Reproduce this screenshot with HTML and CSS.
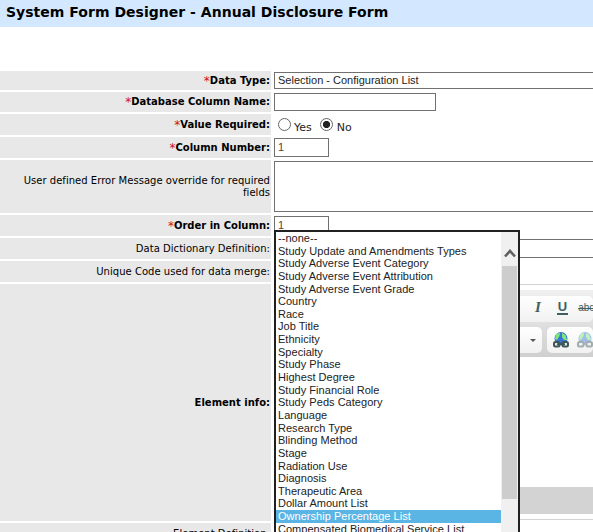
FILE: index.html
```html
<!DOCTYPE html>
<html>
  <head>
    <meta charset="utf-8" />
    <title>System Form Designer</title>
    <link rel="stylesheet" href="styles.css">
  </head>
  <body>
    <h1><span>System Form Designer - Annual Disclosure Form</span></h1>
    <form class="designer">
      <div class="row data-type">
        <label class="required"><span class="star">*</span><span>Data Type:</span></label>
        <div class="field"><div class="select wide">Selection - Configuration List</div></div>
      </div>
      <div class="row column-name">
        <label class="required"><span class="star">*</span><span>Database Column Name:</span></label>
        <div class="field"><input type="text" class="medium" /></div>
      </div>
      <div class="row value-required">
        <label class="required"><span class="star">*</span><span>Value Required:</span></label>
        <div class="field radios">
          <span class="radio"></span><span class="yes">Yes</span>
          <span class="radio checked"></span><span>No</span>
        </div>
      </div>
      <div class="row column-number">
        <label class="required"><span class="star">*</span><span>Column Number:</span></label>
        <div class="field"><input type="text" class="small" value="1" /></div>
      </div>
      <div class="row error-message">
        <label><span>User defined Error Message override for required<br>fields</span></label>
        <div class="field"><textarea class="wide"></textarea></div>
      </div>
      <div class="row order">
        <label class="required"><span class="star">*</span><span>Order in Column:</span></label>
        <div class="field"><input type="text" class="small" value="1" /></div>
      </div>
      <div class="row dictionary">
        <label><span>Data Dictionary Definition:</span></label>
        <div class="field">
          <div class="select wide"></div>
          <!-- open option list -->
          <div class="dropdown">
            <ul>
              <li>--none--</li>
              <li>Study Update and Amendments Types</li>
              <li>Study Adverse Event Category</li>
              <li>Study Adverse Event Attribution</li>
              <li>Study Adverse Event Grade</li>
              <li>Country</li>
              <li>Race</li>
              <li>Job Title</li>
              <li>Ethnicity</li>
              <li>Specialty</li>
              <li>Study Phase</li>
              <li>Highest Degree</li>
              <li>Study Financial Role</li>
              <li>Study Peds Category</li>
              <li>Language</li>
              <li>Research Type</li>
              <li>Blinding Method</li>
              <li>Stage</li>
              <li>Radiation Use</li>
              <li>Diagnosis</li>
              <li>Therapeutic Area</li>
              <li>Dollar Amount List</li>
              <li class="selected">Ownership Percentage List</li>
              <li>Compensated Biomedical Service List</li>
            </ul>
            <div class="scrollbar">
              <svg width="12" height="10" viewBox="0 0 12 10"><path d="M1 8.5 L6 3 L11 8.5" fill="none" stroke="#606060" stroke-width="2.6"/></svg>
              <div class="thumb"></div>
            </div>
          </div>
        </div>
      </div>
      <div class="row merge-code">
        <label><span>Unique Code used for data merge:</span></label>
        <div class="field"></div>
      </div>
      <div class="row element-info">
        <label class="required"><span>Element info:</span></label>
        <div class="field editor">
          <div class="toolbar">
            <div class="group first">
              <span class="italic">I</span>
              <span class="underline">U</span>
              <span class="strike">abc</span>
            </div>
            <div class="second-line">
              <div class="group combo"><i class="arrow"></i></div>
              <div class="group links">
                <svg width="16" height="16" viewBox="0 0 16 16">
                  <circle cx="8" cy="6.500" r="6.500" fill="#3c74d6"/>
                  <path d="M3 2.500 Q5 .5 7 1 L6.500 4 L4 8 L2 7Z M9 1 L12.500 3 L14 8 L11 8 L9 5Z" fill="#7be87b"/>
                  <g fill="#e8eeee" stroke="#3d5657" stroke-width="2"><rect x="1" y="10" width="5.500" height="4.500" rx="1.500"/><rect x="9.500" y="10" width="5.500" height="4.500" rx="1.500"/></g>
                  <path d="M4 12.200H12" stroke="#3d5657" stroke-width="2"/>
                </svg>
                <svg class="off" width="16" height="16" viewBox="0 0 16 16">
                  <circle cx="8" cy="6.500" r="6.500" fill="#3c74d6"/>
                  <path d="M3 2.500 Q5 .5 7 1 L6.500 4 L4 8 L2 7Z M9 1 L12.500 3 L14 8 L11 8 L9 5Z" fill="#7be87b"/>
                  <g fill="#e8eeee" stroke="#3d5657" stroke-width="2"><rect x="1" y="10" width="5.500" height="4.500" rx="1.500"/><rect x="9.500" y="10" width="5.500" height="4.500" rx="1.500"/></g>
                </svg>
              </div>
            </div>
          </div>
          <div class="content"></div>
          <div class="status"></div>
        </div>
      </div>
      <div class="row element-definition">
        <label><span>Element Definition:</span></label>
        <div class="field"></div>
      </div>
    </form>
  </body>
</html>
```

FILE: styles.css
```css
* {
  box-sizing: border-box;
}

body {
  margin: 0;
  height: 532px;
  overflow: hidden;
  background: #fff;
  color: #000;
  font-family: Verdana, "DejaVu Sans", sans-serif;
  font-size: 11px;
}

h1 {
  margin: 0 0 44px;
  height: 27px;
  padding-left: 6px;
  background: #d3e8ff;
  font-size: 14px;
  letter-spacing: 0.02px;
  line-height: 24px;
  white-space: nowrap;
}

.designer {
  display: flex;
  flex-direction: column;
  gap: 2px;
}

.row {
  display: flex;
  flex-shrink: 0;
}

.row > label {
  display: flex;
  align-items: center;
  justify-content: flex-end;
  width: 271px;
  flex-shrink: 0;
  padding-right: 1px;
  background: #e8e8e8;
  font-size: 10px;
  letter-spacing: 0.03px;
  line-height: 12px;
  text-align: right;
  white-space: nowrap;
}

.row > label.required {
  font-weight: bold;
  letter-spacing: 0;
}

.star {
  color: #d01020;
  font-weight: normal;
  font-size: 12px;
}

.field {
  flex: 1;
  min-width: 0;
  padding: 1px 0 1px 3px;
  position: relative;
  display: flex;
}

.data-type { height: 19px; }
.column-name { height: 20px; }
.value-required,
.column-number,
.order,
.dictionary,
.merge-code { height: 21px; }
.error-message { height: 53px; }
.element-info { height: 237px; }
.element-definition { height: 21px; }

input,
textarea,
.select {
  display: block;
  height: 100%;
  margin: 0;
  padding: 0 3px;
  border: 1px solid #707070;
  border-radius: 0;
  background: #fff;
  color: #222;
  font: 11px "Liberation Sans", Arial, sans-serif;
  resize: none;
}

.select {
  line-height: 15px;
}

.wide {
  width: 340px;
  flex-shrink: 0;
}

.medium { width: 162px; }
.small {
  width: 55px;
  padding-bottom: 2px;
  color: #6b3a30;
}

.radios {
  padding: 0 0 0 7px;
  align-items: flex-start;
  color: #222;
  line-height: 27px;
}

.radio {
  width: 13px;
  height: 13px;
  flex-shrink: 0;
  margin: 4px 3px 0 0;
  border: 1px solid #666;
  border-radius: 50%;
}

.radio.checked {
  margin-right: 4px;
  background: radial-gradient(circle, #222 3.2px, #fff 4px);
}

.yes {
  margin-right: 8px;
}

.dropdown {
  position: absolute;
  z-index: 2;
  left: 3px;
  top: -8px;
  width: 246px;
  height: 320px;
  border: 2px solid #202020;
  background: #fff;
  display: flex;
  overflow: hidden;
}

.dropdown ul {
  flex: 1;
  margin: 0;
  padding: 0;
  list-style: none;
  font: 11px/12.65px "Liberation Sans", Arial, sans-serif;
  letter-spacing: 0.03px;
  color: #222;
}

.dropdown li {
  height: 12.65px;
  padding-left: 2px;
  white-space: nowrap;
}

.dropdown .selected {
  background: #5ab4e4;
  color: #fff;
}

.scrollbar {
  width: 17px;
  padding: 0 1px;
  background: #f0f0f0;
}

.scrollbar svg {
  display: block;
  margin: 16px 0 0 2px;
}

.thumb {
  height: 233px;
  margin-top: 8px;
  background: #cdcdcd;
}

.editor {
  flex-direction: column;
  padding: 0 0 0 3px;
}

.toolbar {
  height: 73px;
  padding-top: 11px;
  border-top: 1px solid #d3d3d3;
  background: linear-gradient(#fff 5px, #f0f0f0 5px, #cfcfcf);
}

.group {
  height: 26px;
  display: flex;
  align-items: center;
  background: linear-gradient(#fff, #f1f1f1);
  border-radius: 5px;
  color: #3f5f60;
}

.first {
  gap: 14px;
  padding-left: 261px;
}

.italic {
  margin-top: -3px;
  font: italic bold 15px "Liberation Serif", serif;
}

.underline {
  margin: -3px 0 0 2px;
  padding: 0 1px;
  border-bottom: 2px solid #3f5f60;
  font: bold 13px/13px "Liberation Sans", sans-serif;
}

.strike {
  margin: -3px 0 0 -4px;
  font: 10px "Liberation Sans", sans-serif;
  text-decoration: line-through;
}

.second-line {
  display: flex;
  gap: 5px;
  margin-top: 5px;
}

.combo {
  width: 268px;
  padding-left: 256px;
}

.arrow {
  border: 3px solid transparent;
  border-top-color: #555;
  border-bottom: 0;
}

.links {
  flex: 1;
  gap: 8px;
  padding-left: 6px;
}

.off {
  opacity: .45;
}

.content {
  height: 130px;
}

.status {
  height: 33px;
  border-top: 27px solid #d3d3d3;
  border-bottom: 1px solid #d3d3d3;
}
```
